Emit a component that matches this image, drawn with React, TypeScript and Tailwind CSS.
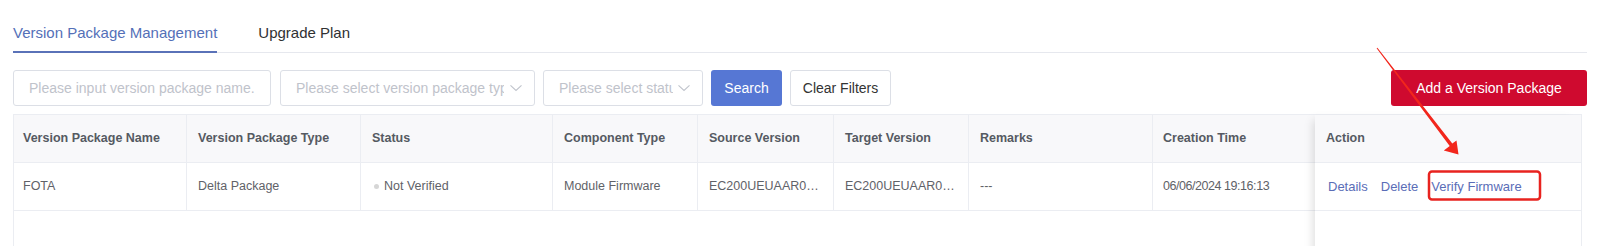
import React from "react";

const cols = [
  { title: "Version Package Name", w: "w-[173px]", pl: "pl-[9px]" },
  { title: "Version Package Type", w: "w-[174px]", pl: "pl-[11px]" },
  { title: "Status", w: "w-[192px]", pl: "pl-[11px]" },
  { title: "Component Type", w: "w-[145px]", pl: "pl-[11px]" },
  { title: "Source Version", w: "w-[136px]", pl: "pl-[11px]" },
  { title: "Target Version", w: "w-[135px]", pl: "pl-[11px]" },
  { title: "Remarks", w: "w-[184px]", pl: "pl-[11px]" },
  { title: "Creation Time", w: "w-[162px]", pl: "pl-[10px]" },
];

function Chevron() {
  return (
    <svg width="12" height="7" viewBox="0 0 12 7" className="absolute right-[12px] top-1/2 -translate-y-1/2">
      <path d="M0.5 0.8 L6 6 L11.5 0.8" fill="none" stroke="#c0c4cc" strokeWidth="1.1" />
    </svg>
  );
}

export default function App() {
  const row: React.ReactNode[] = [
    "FOTA",
    "Delta Package",
    <span className="flex items-center" key="s">
      <span className="inline-block w-[5px] h-[5px] ml-[2px] mr-[5px] rounded-full bg-[#d6d6d6]" />
      Not Verified
    </span>,
    "Module Firmware",
    "EC200UEUAAR03A01M08",
    "EC200UEUAAR03A02M08",
    "---",
    <span className="tracking-[-0.45px]" key="d">06/06/2024 19:16:13</span>,
  ];
  return (
    <div className="relative h-[246px] w-[1607px] overflow-hidden bg-white font-['Liberation_Sans',Arial,sans-serif] pl-[13px] pr-[20px]">
      {/* Tabs */}
      <div className="flex gap-[41px] border-b border-[#e6e8ee] h-[53px]">
        <div className="h-[53px] flex items-center pt-[15px] border-b-2 border-[#5a72b8] text-[15px] text-[#5470b8] -mb-px">
          Version Package Management
        </div>
        <div className="h-[53px] flex items-center pt-[15px] border-b-2 border-transparent text-[15px] text-[#303133] -mb-px">
          Upgrade Plan
        </div>
      </div>

      {/* Filters */}
      <div className="flex items-center justify-between mt-[17px]">
        <div className="flex items-center gap-[8px]">
          <div className="w-[258px] h-[36px] mr-px border border-[#dcdfe6] rounded-[3px] flex items-center pl-[15px] text-[14px] text-[#bfc3cb]">
            Please input version package name.
          </div>
          <div className="relative w-[255px] h-[36px] border border-[#dcdfe6] rounded-[3px] flex items-center pl-[15px] pr-[30px] text-[14px] text-[#bfc3cb]">
            <span className="overflow-hidden whitespace-nowrap">Please select version package type</span>
            <Chevron />
          </div>
          <div className="relative w-[160px] h-[36px] border border-[#dcdfe6] rounded-[3px] flex items-center pl-[15px] pr-[29px] text-[14px] text-[#bfc3cb]">
            <span className="overflow-hidden whitespace-nowrap">Please select status</span>
            <Chevron />
          </div>
          <div className="w-[71px] h-[36px] rounded-[3px] bg-[#5677d4] text-white text-[14px] flex items-center justify-center">
            Search
          </div>
          <div className="w-[101px] h-[36px] rounded-[3px] border border-[#dcdfe6] text-[#333] text-[14px] flex items-center justify-center">
            Clear Filters
          </div>
        </div>
        <div className="w-[196px] h-[36px] rounded-[3px] bg-[#cf0a2f] text-white text-[14px] flex items-center justify-center">
          Add a Version Package
        </div>
      </div>

      {/* Table */}
      <div className="mt-[8px] w-[1569px] h-[200px] border border-[#ebedf2] flex text-[12.5px]">
        <div className="flex flex-col shrink-0">
          <div className="flex h-[48px] bg-[#f8f8fa] border-b border-[#ebedf2]">
            {cols.map((c, i) => (
              <div
                key={c.title}
                className={`${c.w} ${c.pl} shrink-0 pr-[10px] flex items-center font-bold text-[#555a62] ${i < cols.length - 1 ? "border-r border-[#ebedf2]" : ""}`}
              >
                {c.title}
              </div>
            ))}
          </div>
          <div className="flex h-[48px] border-b border-[#ebedf2]">
            {cols.map((c, i) => (
              <div
                key={c.title}
                className={`${c.w} ${c.pl} shrink-0 pr-[11px] flex items-center text-[#5f6268] ${i < cols.length - 1 ? "border-r border-[#ebedf2]" : ""}`}
              >
                <span className="truncate block w-full">{row[i]}</span>
              </div>
            ))}
          </div>
        </div>
        <div className="relative z-10 w-[266px] shrink-0 flex flex-col bg-white shadow-[-7px_0_9px_-5px_rgba(0,0,0,0.13)]">
          <div className="h-[48px] bg-[#f8f8fa] border-b border-[#ebedf2] pl-[11px] flex items-center font-bold text-[#555a62]">
            Action
          </div>
          <div className="h-[48px] border-b border-[#ebedf2] pl-[13px] flex items-center gap-[13px] text-[13px] text-[#5a6db7]">
            <span>Details</span>
            <span>Delete</span>
            <span>Verify Firmware</span>
          </div>
        </div>
      </div>

      {/* Annotation overlay */}
      <svg className="absolute left-0 top-0 pointer-events-none z-20" width="1607" height="246" viewBox="0 0 1607 246">
        <rect x="1429" y="171.5" width="111" height="28" rx="3" fill="none" stroke="#e8231f" strokeWidth="2.5" />
        <polygon
          points="1377.4,47.7 1452.3,143.6 1456.5,140.5 1458.5,154.5 1443.8,150.5 1449.7,145.9 1376.6,48.3"
          fill="#f2261c"
        />
      </svg>
    </div>
  );
}
